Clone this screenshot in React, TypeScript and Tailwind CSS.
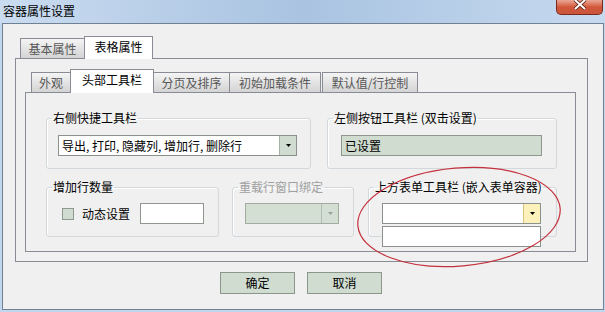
import type { ReactNode } from "react";

function Arrow({ color = "#000" }: { color?: string }) {
  return (
    <svg width="5" height="3" viewBox="0 0 5 3">
      <path d="M0 0h5L2.5 3z" fill={color} />
    </svg>
  );
}

function Tab({
  label,
  w,
  active,
  h,
  ml = "",
}: {
  label: string;
  w: string;
  active?: boolean;
  h?: string;
  ml?: string;
}) {
  if (active) {
    return (
      <div
        className={`${w} ${h} ${ml} flex items-center justify-center pb-[3px] border border-b-0 border-[#898c95] bg-white text-black`}
      >
        {label}
      </div>
    );
  }
  return (
    <div
      className={`${w} ${ml} h-[20px] mb-[1px] flex items-center justify-center border border-b-0 border-[#898c95] bg-linear-to-b from-[#f4f4f4] to-[#d4d4d4] text-[#575757]`}
    >
      {label}
    </div>
  );
}

function Group({
  label,
  w,
  h,
  disabled,
  children,
}: {
  label: string;
  w: string;
  h: string;
  disabled?: boolean;
  children: ReactNode;
}) {
  return (
    <fieldset
      className={`${w} ${h} rounded-[3px] border border-[#d2d8dc] shadow-[inset_1px_1px_0_#fff]`}
    >
      <legend
        className={`ml-[5px] px-[1px] leading-[14px] ${disabled ? "text-[#a0a0a0]" : "text-black"}`}
      >
        {label}
      </legend>
      {children}
    </fieldset>
  );
}

export default function App() {
  return (
    <div className="relative w-[605px] h-[312px] overflow-hidden bg-[#c2d7ed] text-[12px] leading-none text-black font-['Noto_Sans_CJK_SC',sans-serif]">
      {/* title bar */}
      <div className="relative h-[23px] flex items-center pl-[3px] pb-[1px] bg-linear-to-r from-[#cadcf0] via-[#a9c3e1] to-[#c6daef]">
        <span className="text-[12px] text-black">容器属性设置</span>
        <div className="absolute top-0 right-[2px] w-[47px] h-[15px] flex justify-center rounded-b-[5px] border border-t-0 border-[#7a2a1c] bg-linear-to-b from-[#e9a896] via-[#d2573b] to-[#c9553a]">
          <svg width="14" height="10" viewBox="0 0 14 10" className="mt-[0px]">
            <path d="M2 0L12 9M12 0L2 9" stroke="#5a1c12" strokeWidth="3.6" />
            <path d="M2 0L12 9M12 0L2 9" stroke="#fff" strokeWidth="2" />
          </svg>
        </div>
      </div>

      {/* window body */}
      <div className="ml-[2px] w-[602px] h-[287px] border border-[#6f8193] bg-[#f0f0f0]">
        <div className="pl-[12px] pt-[12px]">
          <div className="relative z-10 -mb-[1px] ml-[5px] flex h-[23px] items-end">
            <Tab label="基本属性" w="w-[65px]" />
            <Tab label="表格属性" w="w-[69px]" h="h-[23px]" ml="-ml-[1px]" active />
          </div>
          <div className="w-[573px] h-[204px] border border-[#898c95] bg-[#f0f0f0] pl-[9px] pt-[10px]">
            <div className="relative z-10 -mb-[1px] ml-[6px] flex h-[24px] items-end">
              <Tab label="外观" w="w-[40px]" />
              <Tab label="头部工具栏" w="w-[84px]" h="h-[24px]" ml="-ml-[1px]" active />
              <Tab label="分页及排序" w="w-[77px]" ml="-ml-[1px]" />
              <Tab label="初始加载条件" w="w-[92px]" ml="-ml-[1px]" />
              <Tab label="默认值/行控制" w="w-[96px]" ml="ml-[1px]" />
            </div>
            <div className="w-[551px] h-[160px] border border-[#898c95] bg-[#f0f0f0] pl-[20px] pt-[18px]">
              <div className="flex gap-[16px]">
                <Group label="右侧快捷工具栏" w="w-[265px]" h="h-[58px]">
                  <div className="ml-[11px] mt-[10px] flex w-[239px] h-[21px] border border-[#8a918a]">
                    <div className="flex-1 bg-white flex items-center pl-[3px]">
                      导出, 打印, 隐藏列, 增加行, 删除行
                    </div>
                    <div className="w-[17px] border-l border-[#a7b2a7] bg-[#cfdccf] flex items-center justify-center">
                      <Arrow />
                    </div>
                  </div>
                </Group>
                <Group label="左侧按钮工具栏 (双击设置)" w="w-[230px]" h="h-[58px]">
                  <div className="ml-[13px] mt-[10px] flex items-center w-[201px] h-[21px] border border-[#8f978f] bg-[#cfdccf] pl-[3px]">
                    已设置
                  </div>
                </Group>
              </div>

              <div className="mt-[11px] flex">
                <Group label="增加行数量" w="w-[173px]" h="h-[57px]">
                  <div className="mt-[9px] ml-[15px] flex items-center h-[21px]">
                    <div className="w-[12px] h-[12px] border border-[#8f998f] bg-[#cfdccf]" />
                    <span className="ml-[8px]">动态设置</span>
                    <div className="ml-[10px] w-[64px] h-[21px] border border-[#8f978f] bg-white" />
                  </div>
                </Group>
                <div className="ml-[13px]">
                  <Group label="重载行窗口绑定" w="w-[122px]" h="h-[57px]" disabled>
                    <div className="ml-[12px] mt-[9px] flex w-[94px] h-[21px] border border-[#a3aba3] bg-[#d2dfd2]">
                      <div className="flex-1" />
                      <div className="w-[17px] border-l border-[#b3bcb3] flex items-center justify-center">
                        <Arrow color="#9aa09a" />
                      </div>
                    </div>
                  </Group>
                </div>
                <div className="ml-[14px]">
                  <Group label="上方表单工具栏 (嵌入表单容器)" w="w-[189px]" h="h-[57px]">
                    <div className="relative ml-[13px] mt-[9px] w-[159px] h-[21px]">
                      <div className="flex h-[21px] border border-[#8a918a]">
                        <div className="flex-1 bg-white" />
                        <div className="w-[17px] border-l border-[#dcc27a] bg-[#fcf1bb] flex items-center justify-center">
                          <Arrow />
                        </div>
                      </div>
                      <div className="absolute left-0 top-[23px] z-10 w-[159px] h-[21px] border border-[#8a918a] bg-white" />
                    </div>
                  </Group>
                </div>
              </div>
            </div>
          </div>

          <div className="ml-[205px] mt-[10px] flex gap-[12px]">
            <button className="w-[75px] h-[22px] border border-[#8c978c] bg-[#cfdccf] flex items-center justify-center">
              确定
            </button>
            <button className="w-[75px] h-[22px] border border-[#8c978c] bg-[#cfdccf] flex items-center justify-center">
              取消
            </button>
          </div>
        </div>
      </div>

      {/* red annotation ellipse */}
      <svg
        className="pointer-events-none absolute left-[352px] top-[163px] z-20"
        width="214"
        height="108"
        viewBox="0 0 214 108"
      >
        <ellipse
          cx="107"
          cy="54"
          rx="101.5"
          ry="49"
          transform="rotate(-5 107 54)"
          fill="none"
          stroke="#c4303c"
          strokeWidth="1.2"
        />
      </svg>
    </div>
  );
}
